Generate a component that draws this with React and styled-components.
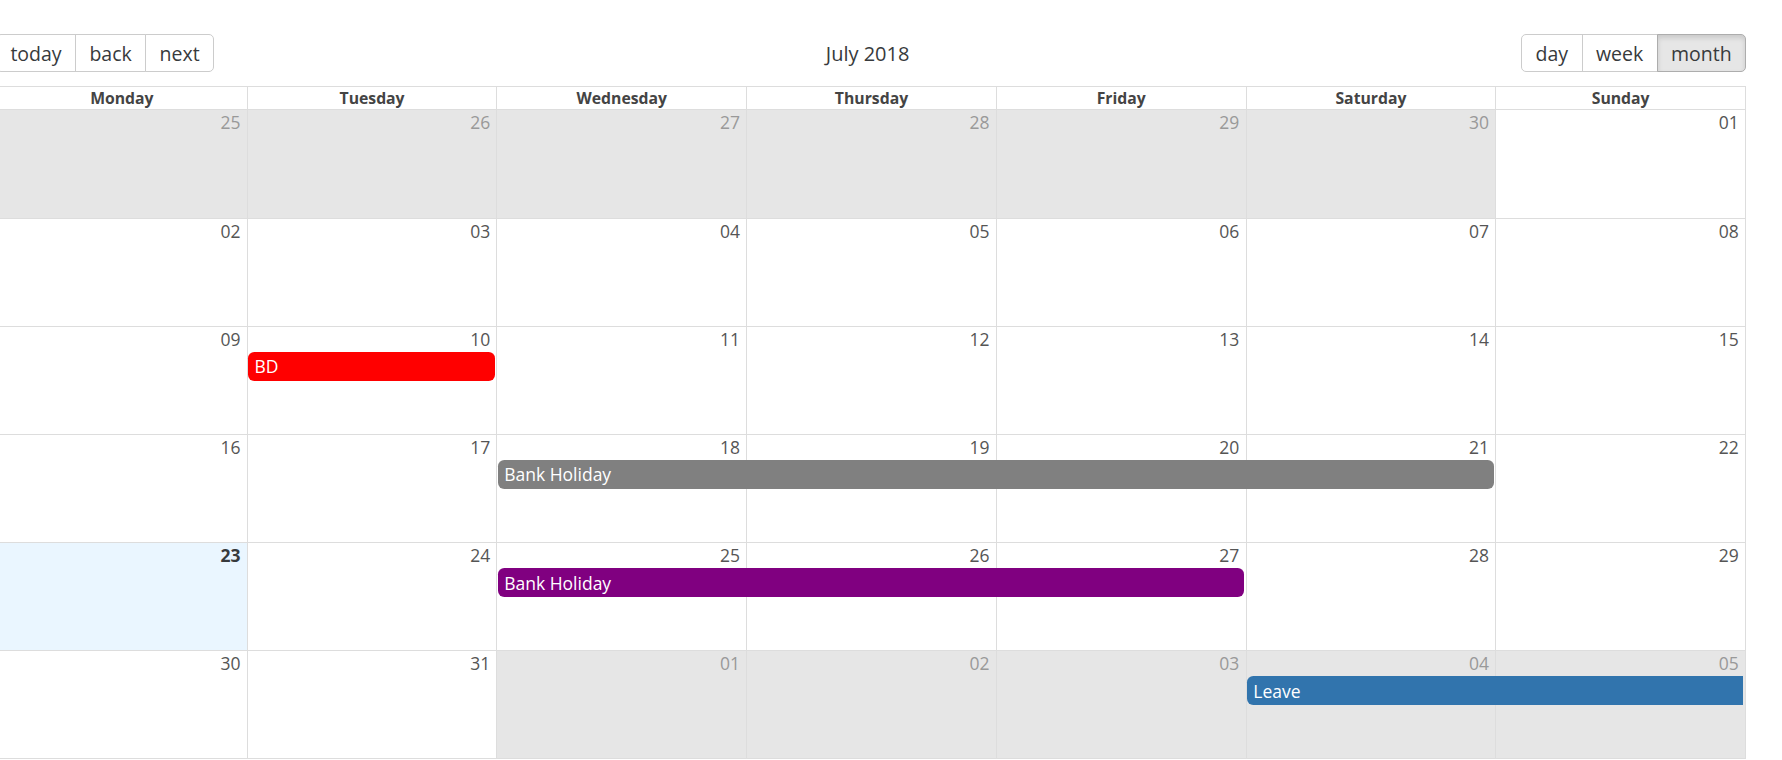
import React from "react";
import styled, { createGlobalStyle, css } from "styled-components";

const GlobalStyle = createGlobalStyle`
  html, body {
    margin: 0;
    padding: 0;
    background: #ffffff;
    overflow: hidden;
  }
  body {
    font-family: "Open Sans", "Liberation Sans", sans-serif;
    font-size: 17.5px;
    color: #373a3c;
  }
  *, *::before, *::after { box-sizing: border-box; }
`;

const Page = styled.div`
  padding-top: 34px;
  margin-left: -4px;
  width: 1750px;
`;

const Toolbar = styled.div`
  display: flex;
  align-items: center;
  margin-bottom: 14px;
`;

const ButtonGroup = styled.div`
  display: inline-flex;
  white-space: nowrap;
`;

const ToolButton = styled.button`
  font-family: inherit;
  font-size: 19.5px;
  color: #373a3c;
  background: ${(p) => (p.$active ? "#e6e6e6" : "#ffffff")};
  border: 1px solid ${(p) => (p.$active ? "#adadad" : "#cccccc")};
  box-shadow: ${(p) => (p.$active ? "inset 0 3px 5px rgba(0,0,0,0.125)" : "none")};
  padding: 4.7px 13.4px;
  line-height: normal;
  margin: 0;
  border-radius: 0;
  cursor: pointer;
  & + & { margin-left: -1px; }
  &:first-child { border-radius: 5px 0 0 5px; }
  &:last-child { border-radius: 0 5px 5px 0; }
`;

const Label = styled.span`
  flex: 1 1 auto;
  padding: 0 10px;
  text-align: center;
  font-size: 20px;
  color: #373a3c;
`;

const MonthView = styled.div`
  height: 673px;
  border: 1px solid #dddddd;
  display: flex;
  flex-direction: column;
`;

const HeaderRow = styled.div`
  display: grid;
  grid-template-columns: repeat(7, minmax(0, 1fr));
`;

const HeaderCell = styled.div`
  font-size: 15.75px;
  font-weight: 700;
  text-align: center;
  padding: 0 3px;
  line-height: normal;
  color: #444444;
  border-bottom: 1px solid #dddddd;
  white-space: nowrap;
  overflow: hidden;
  & + & { border-left: 1px solid #dddddd; }
`;

const WeekRow = styled.div`
  flex: 1 0 0;
  min-height: 0;
  display: grid;
  grid-template-columns: repeat(7, minmax(0, 1fr));
  grid-template-rows: auto auto 1fr;
  & + & { border-top: 1px solid #dddddd; }
`;

const DayBg = styled.div`
  grid-row: 1 / 4;
  grid-column: ${(p) => p.$col};
  border-left: ${(p) => (p.$col === 1 ? "none" : "1px solid #dddddd")};
  background: ${(p) => (p.$off ? "#e6e6e6" : p.$today ? "#eaf6ff" : "transparent")};
`;

const DateNum = styled.div`
  grid-row: 1;
  grid-column: ${(p) => p.$col};
  text-align: right;
  padding-right: 6.25px;
  line-height: normal;
  color: ${(p) => (p.$off ? "#999999" : "#555555")};
  ${(p) =>
    p.$today &&
    css`
      font-weight: 700;
      color: #373a3c;
    `}
`;

const Segment = styled.div`
  grid-row: 2;
  grid-column: ${(p) => p.$start} / span ${(p) => p.$span};
  padding: 1px 1.5px 1px 1.5px;
  min-width: 0;
`;

const EventBar = styled.div`
  background: ${(p) => p.$color};
  color: #ffffff;
  padding: 2.5px 6.25px;
  border-radius: ${(p) => (p.$continues ? "6.25px 0 0 6.25px" : "6.25px")};
  line-height: normal;
  white-space: nowrap;
  overflow: hidden;
  text-overflow: ellipsis;
  cursor: pointer;
`;

const dayNames = ["Monday", "Tuesday", "Wednesday", "Thursday", "Friday", "Saturday", "Sunday"];

const weeks = [
  {
    days: [["25", true], ["26", true], ["27", true], ["28", true], ["29", true], ["30", true], ["01", false]],
    events: [],
  },
  {
    days: [["02"], ["03"], ["04"], ["05"], ["06"], ["07"], ["08"]],
    events: [],
  },
  {
    days: [["09"], ["10"], ["11"], ["12"], ["13"], ["14"], ["15"]],
    events: [{ title: "BD", start: 2, span: 1, color: "#ff0000" }],
  },
  {
    days: [["16"], ["17"], ["18"], ["19"], ["20"], ["21"], ["22"]],
    events: [{ title: "Bank Holiday", start: 3, span: 4, color: "#808080" }],
  },
  {
    days: [["23", false, true], ["24"], ["25"], ["26"], ["27"], ["28"], ["29"]],
    events: [{ title: "Bank Holiday", start: 3, span: 3, color: "#800080" }],
  },
  {
    days: [["30"], ["31"], ["01", true], ["02", true], ["03", true], ["04", true], ["05", true]],
    events: [{ title: "Leave", start: 6, span: 2, color: "#3174ad", continues: true }],
  },
];

export default function App() {
  return (
    <>
      <GlobalStyle />
      <Page>
        <Toolbar>
          <ButtonGroup>
            <ToolButton type="button">today</ToolButton>
            <ToolButton type="button">back</ToolButton>
            <ToolButton type="button">next</ToolButton>
          </ButtonGroup>
          <Label>July 2018</Label>
          <ButtonGroup>
            <ToolButton type="button">day</ToolButton>
            <ToolButton type="button">week</ToolButton>
            <ToolButton type="button" $active>
              month
            </ToolButton>
          </ButtonGroup>
        </Toolbar>
        <MonthView>
          <HeaderRow>
            {dayNames.map((d) => (
              <HeaderCell key={d}>{d}</HeaderCell>
            ))}
          </HeaderRow>
          {weeks.map((w, wi) => (
            <WeekRow key={wi}>
              {w.days.map(([n, off, today], i) => (
                <DayBg key={"bg" + i} $col={i + 1} $off={off} $today={today} />
              ))}
              {w.days.map(([n, off, today], i) => (
                <DateNum key={"d" + i} $col={i + 1} $off={off} $today={today}>
                  {n}
                </DateNum>
              ))}
              {w.events.map((e, ei) => (
                <Segment key={"e" + ei} $start={e.start} $span={e.span}>
                  <EventBar $color={e.color} $continues={e.continues}>
                    {e.title}
                  </EventBar>
                </Segment>
              ))}
            </WeekRow>
          ))}
        </MonthView>
      </Page>
    </>
  );
}
